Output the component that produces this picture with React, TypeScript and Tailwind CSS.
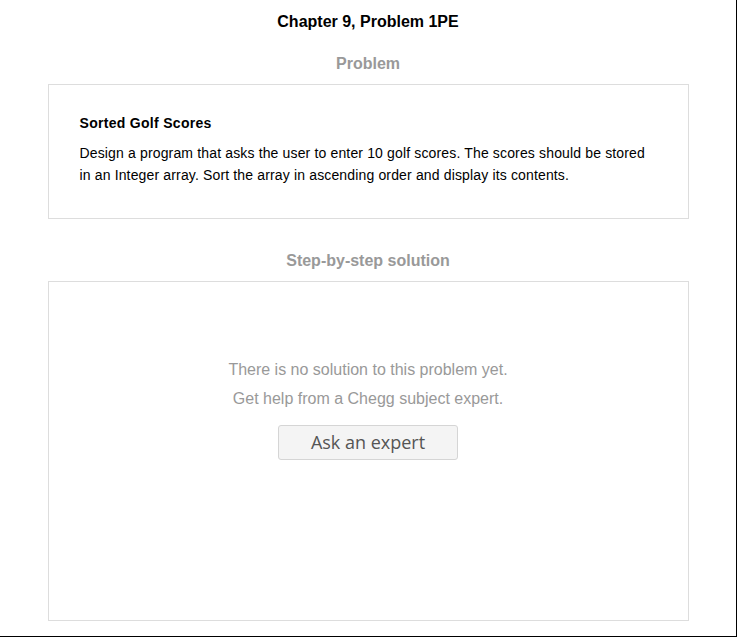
import React from "react";

export default function App() {
  return (
    <div
      className="w-[737px] h-[637px] border-r border-b border-black bg-white"
      style={{ fontFamily: '"Liberation Sans", Arial, sans-serif' }}
    >
      <div className="flex flex-col items-center">
        <h1 className="mt-[12px] h-[20px] text-[16px] leading-[20px] font-bold text-black">
          Chapter 9, Problem 1PE
        </h1>
        <h2 className="mt-[22px] h-[20px] text-[16px] leading-[20px] font-bold text-[#999999]">
          Problem
        </h2>
        <div className="mt-[10px] w-[641px] h-[135px] border border-[#dddddd] pl-[31px] pr-[30px] pt-[29px]">
          <div className="text-[14px] leading-[18px] font-bold text-black tracking-[0.3px]">Sorted Golf Scores</div>
          <p className="mt-[10px] text-[14px] leading-[22px] text-black tracking-[0.15px]">
            Design a program that asks the user to enter 10 golf scores. The scores should be stored
            in an Integer array. Sort the array in ascending order and display its contents.
          </p>
        </div>
        <h2 className="mt-[32px] h-[20px] text-[16px] leading-[20px] font-bold text-[#999999]">
          Step-by-step solution
        </h2>
        <div className="mt-[10px] w-[641px] h-[340px] border border-[#dddddd] flex flex-col items-center pt-[73px]">
          <div className="text-[16px] leading-[29px] text-[#999999] text-center">
            <div>There is no solution to this problem yet.</div>
            <div>Get help from a Chegg subject expert.</div>
          </div>
          <button
            className="mt-[12px] w-[180px] h-[35px] rounded-[3px] border border-[#d5d5d5] bg-[#f4f4f4] text-[18px] text-[#555555] leading-[33px]"
            style={{ fontFamily: '"Open Sans", "Noto Sans", sans-serif' }}
          >
            Ask an expert
          </button>
        </div>
      </div>
    </div>
  );
}
